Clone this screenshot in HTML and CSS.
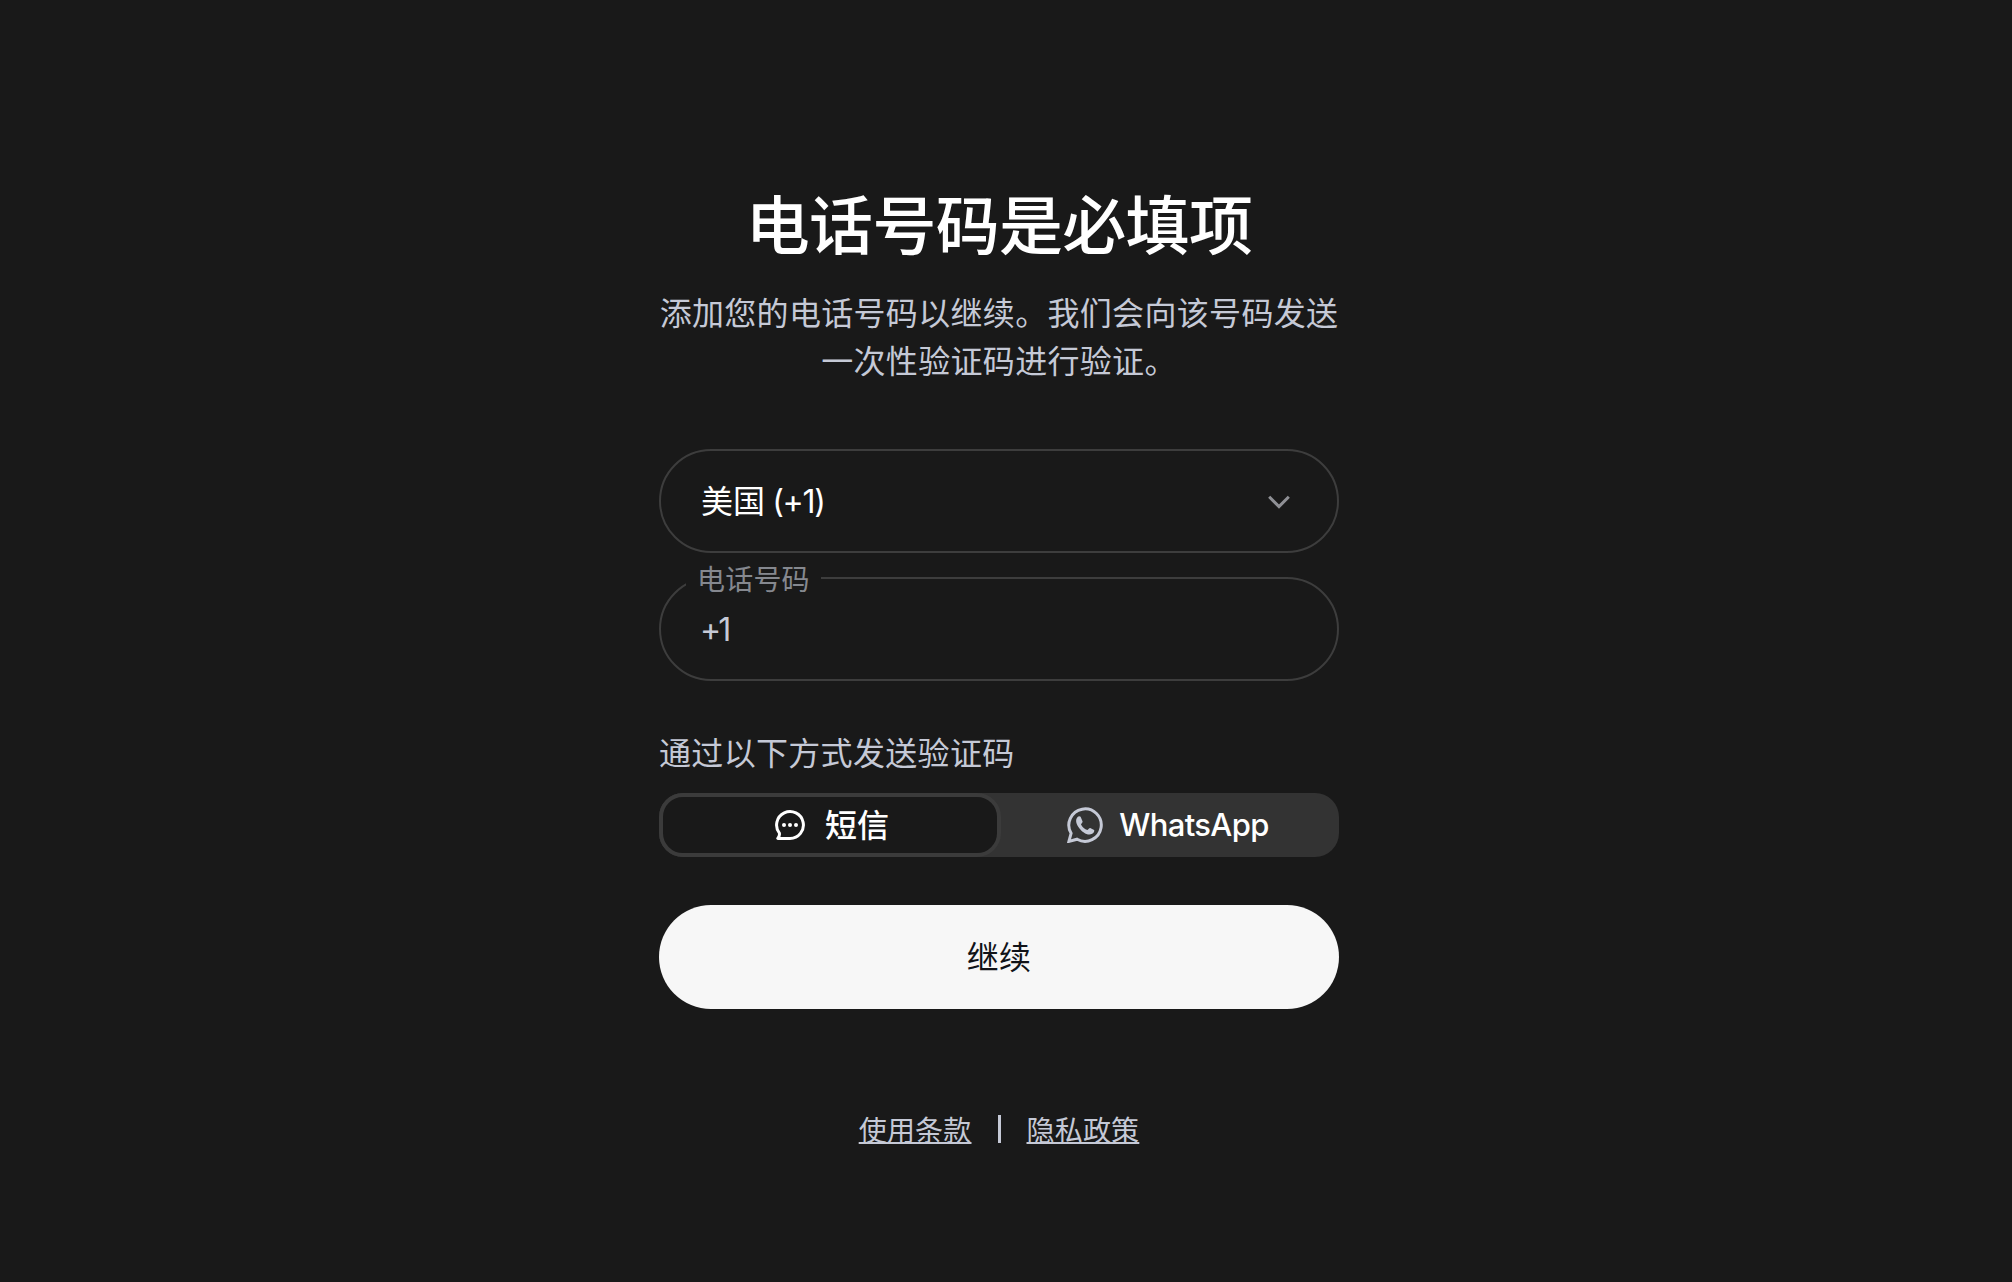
FILE: index.html
```html
<!DOCTYPE html>
<html lang="zh-CN">
<head>
<meta charset="utf-8">
<title>电话号码是必填项</title>
<link rel="stylesheet" href="styles.css">
</head>
<body>
<main class="page">
  <h1 class="title">电话号码是必填项</h1>
  <p class="intro">添加您的电话号码以继续。我们会向该号码发送<br>一次性验证码进行验证。</p>
  <div class="select">
    <span class="select-value">美国 <span class="latin">(+1)</span></span>
    <svg class="chevron" viewBox="0 0 24 14" fill="none" stroke="currentColor" stroke-width="3"><path d="M2.2 1.8 12 11.6 21.8 1.8"/></svg>
  </div>
  <div class="field">
    <span class="field-label">电话号码</span>
    <span class="field-value">+1</span>
  </div>
  <p class="method">通过以下方式发送验证码</p>
  <div class="segments">
    <div class="segment active">
      <svg class="sms" viewBox="0 0 30 30"><path d="M2.8 28.4H15A13.4 13.4 0 1 0 4.4 23.2Q4.9 25.7 2.8 28.4Z" fill="none" stroke="currentColor" stroke-width="3" stroke-linejoin="round"/><g fill="currentColor"><circle cx="9" cy="15" r="2"/><circle cx="15" cy="15" r="2"/><circle cx="21" cy="15" r="2"/></g></svg>
      <span class="segment-text">短信</span>
    </div>
    <div class="segment">
      <svg class="whatsapp" viewBox="0 0 36 36"><path d="M1.9 34.4 4.1 26.3A16.2 16.2 0 1 1 10.1 32.2Z" fill="none" stroke="currentColor" stroke-width="3"/><path d="M10.6 9.9C11.4 9.1 13 9.1 13.6 9.8L15.6 14.4C15.8 15.4 14.3 16.6 14 17.4C15.5 20.2 17.7 22 20.4 23.1C21.4 22.6 22.2 20.9 23.2 21L27.1 22.9C27.7 23.5 26.8 26 25.2 26.8C20.7 29.2 15.3 24.9 12.5 21.4C9.5 17.7 7.7 12.9 10.6 9.9Z" fill="currentColor"/></svg>
      <span class="segment-text latin">WhatsApp</span>
    </div>
  </div>
  <button class="submit" type="button">继续</button>
  <nav class="links"><a href="#">使用条款</a><span class="divider"></span><a href="#">隐私政策</a></nav>
</main>
</body>
</html>
```
FILE: styles.css
```css
* { box-sizing: border-box; }
body {
  margin: 0;
  min-height: 1282px;
  background: #191919;
  color: #fff;
  font-family: "Noto Sans CJK SC", sans-serif;
  font-size: 32px;
}
.page {
  width: 680px;
  margin-left: 659px;
  padding-top: 181px;
  display: flex;
  flex-direction: column;
}
.title {
  margin: 0;
  font-size: 64px;
  line-height: 80px;
  font-weight: 500;
  letter-spacing: -.7px;
  text-align: center;
  white-space: nowrap;
}
.intro {
  margin: 26px 0 0;
  line-height: 48px;
  letter-spacing: .32px;
  color: #c5c9d6;
  text-align: center;
  white-space: nowrap;
}
.latin, .field-value { font-family: Inter, sans-serif; }
.select, .field {
  height: 104px;
  border: 2px solid #3d3d3d;
  border-radius: 52px;
  padding: 0 40px;
  display: flex;
  align-items: center;
}
.select { margin-top: 66px; justify-content: space-between; }
.select-value { padding-bottom: 5px; }
.select .latin { letter-spacing: -1.3px; }
.chevron { width: 24px; height: 14px; margin: 2px 6px 0 0; color: #8f9095; }
.field { position: relative; margin-top: 24px; }
.field-label {
  position: absolute;
  left: 25px;
  top: -19px;
  width: 135px;
  padding-left: 11px;
  background: #191919;
  color: #85888f;
  font-size: 28px;
  line-height: 36px;
  letter-spacing: .2px;
  white-space: nowrap;
}
.field-value { color: #c5c9d6; margin-left: -1px; letter-spacing: -3px; }
.method {
  margin: 46px 0 0;
  line-height: 48px;
  letter-spacing: .32px;
  color: #c5c9d6;
}
.segments {
  display: flex;
  height: 64px;
  margin-top: 18px;
  border-radius: 24px;
  background: #333;
}
.segment {
  flex: 1;
  display: flex;
  align-items: center;
  justify-content: center;
  padding-right: 4px;
  border: 4px solid transparent;
  border-radius: 24px;
}
.segment-text { padding-bottom: 4px; }
.active {
  flex: 0 0 342px;
  padding: 0 0 0 4px;
  background: #191919;
  border-color: #3b3b3b;
  font-weight: 500;
}
.sms { width: 30px; height: 30px; margin-right: 20px; }
.whatsapp { width: 36px; height: 36px; margin-right: 16px; color: #c5c9d6; }
.segment .latin { padding-bottom: 2px; font-weight: 500; font-size: 31px; letter-spacing: -.65px; }
.submit {
  height: 104px;
  margin-top: 48px;
  padding: 0 0 5px;
  border: 0;
  border-radius: 52px;
  background: #f7f7f7;
  color: #111318;
  font: inherit;
  letter-spacing: .32px;
}
.links {
  display: flex;
  justify-content: center;
  align-items: center;
  gap: 26px;
  margin-top: 99px;
  font-size: 28px;
  line-height: 42px;
  letter-spacing: .2px;
  color: #c5c9d6;
}
.links a {
  color: inherit;
  text-decoration: underline;
  text-decoration-thickness: 2px;
  text-decoration-skip-ink: none;
}
.divider { width: 3px; height: 28px; background: #c5c9d6; }
```
